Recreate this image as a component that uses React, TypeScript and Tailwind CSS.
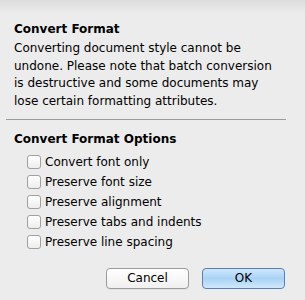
import React from "react";

function Checkbox() {
  return (
    <span className="inline-block w-[14px] h-[14px] rounded-[3px] border border-[#a0a0a0] bg-gradient-to-b from-[#ffffff] to-[#ededed] shadow-[inset_0_1px_0_#fff]" />
  );
}

export default function App() {
  const opts = [
    "Convert font only",
    "Preserve font size",
    "Preserve alignment",
    "Preserve tabs and indents",
    "Preserve line spacing",
  ];
  return (
    <div
      className="w-[305px] h-[300px] bg-[#ececec] text-black relative overflow-hidden"
      style={{ fontFamily: '"DejaVu Sans", sans-serif' }}
    >
      <div className="absolute inset-x-0 top-0 h-[14px] bg-gradient-to-b from-[#dcdcdc] to-[#ececec]" />
      <div className="relative px-[14px] pt-[21px]">
        <div className="text-[12px] font-bold leading-[16px]">Convert Format</div>
        <div className="mt-[3px] text-[12px] leading-[17.5px] whitespace-nowrap">
          Converting document style cannot be
          <br />
          undone. Please note that batch conversion
          <br />
          is destructive and some documents may
          <br />
          lose certain formatting attributes.
        </div>
      </div>
      <div className="relative ml-[6px] mt-[8.5px] w-[280px] h-px bg-[#9a9a9a]" />
      <div className="relative px-[14px] pt-[11px]">
        <div className="text-[12px] font-bold leading-[16px]">Convert Format Options</div>
        <div className="mt-[5px] pl-[13px] flex flex-col">
          {opts.map((o) => (
            <label key={o} className="flex items-center gap-[4px] h-[20px] text-[12px]">
              <Checkbox />
              <span>{o}</span>
            </label>
          ))}
        </div>
      </div>
      <div className="relative flex justify-end gap-[13px] pr-[20px] mt-[16px]">
        <button className="w-[83px] h-[21px] rounded-[4px] border border-[#9b9b9b] bg-gradient-to-b from-[#ffffff] to-[#f0f0f0] text-[12px] leading-[19px] shadow-[0_1px_0_rgba(0,0,0,0.05)]">
          Cancel
        </button>
        <button className="w-[83px] h-[21px] rounded-[4px] border border-[#5a7fb5] bg-gradient-to-b from-[#cfe6fb] via-[#a9d3f6] to-[#cfe8fc] text-[12px] leading-[19px]">
          OK
        </button>
      </div>
    </div>
  );
}
